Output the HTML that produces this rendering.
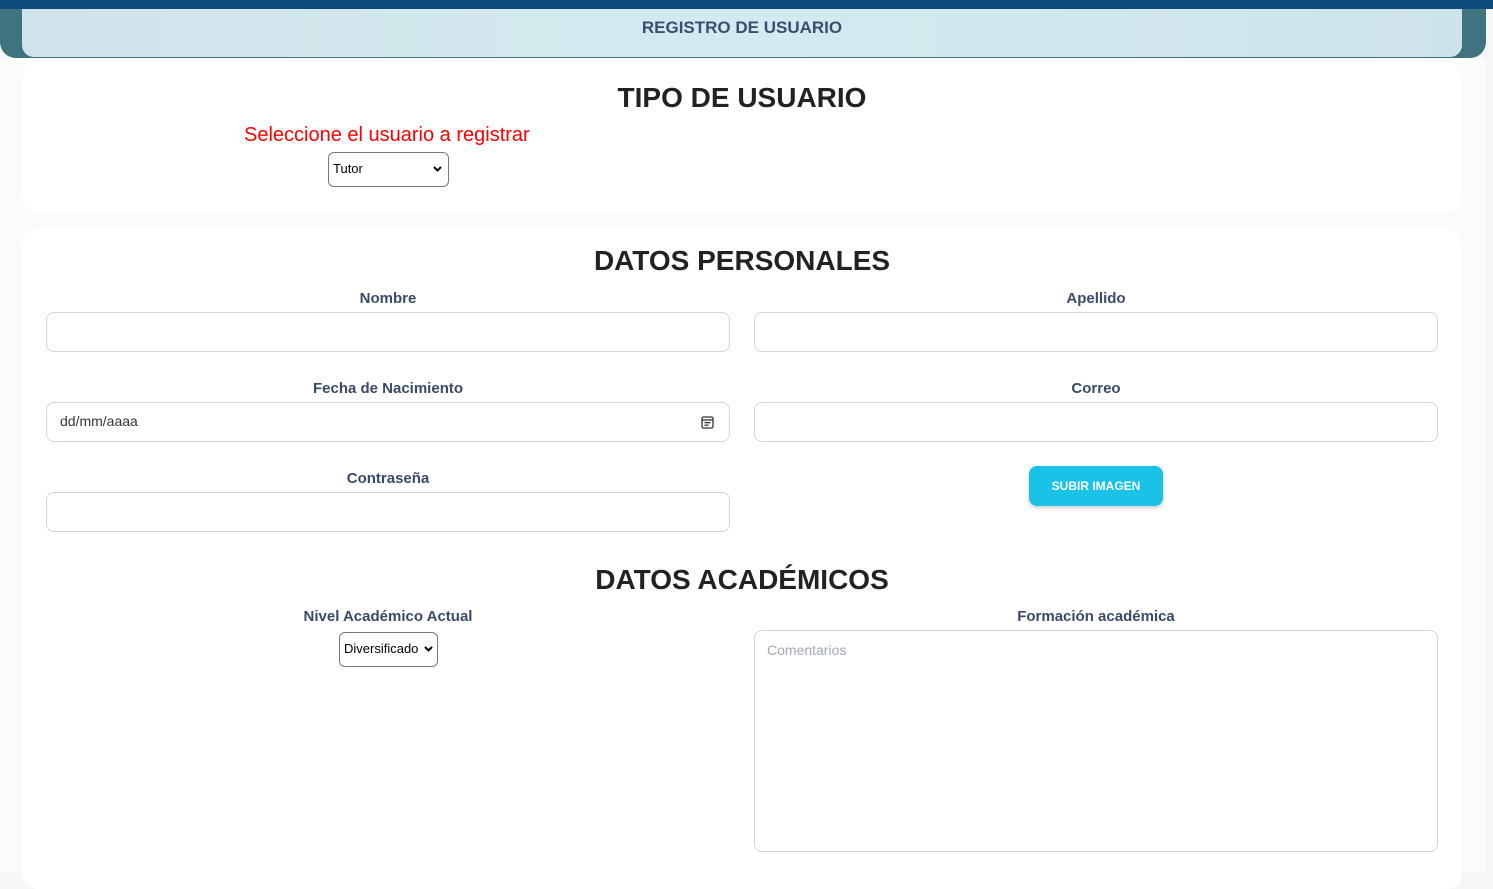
<!DOCTYPE html>
<html><head><meta charset="utf-8"><style>
*{box-sizing:border-box;margin:0;padding:0}
body{width:1493px;height:872px;overflow:hidden;background:#f5f6f8;font-family:"Liberation Sans",sans-serif;position:relative}
.a{position:absolute}
.top{left:0;top:0;width:1493px;height:9px;background:#0e4a7b}
.teal{left:0;top:9px;width:1486px;height:49px;background:#3f7380;border-radius:0 0 16px 16px}
.hdr{left:22px;top:9px;width:1440px;height:48px;background:linear-gradient(90deg,#cfe4ea,#d3ebf0 50%,#cde3ea);border-radius:0 0 12px 12px;text-align:center;font-size:17px;font-weight:bold;color:#3a4f6e;line-height:38px}
.panel{left:0;top:58px;width:1486px;height:814px;background:#fbfbfc}
.card{background:#fff;border-radius:16px}
.h1{font-weight:bold;font-size:28px;color:#222;text-align:center;width:1440px;left:22px}
.lbl{font-size:15px;color:#3a4a68;text-align:center;width:684px;font-weight:bold}
.inp{width:684px;height:40px;border:1px solid #d4d4dc;border-radius:8px;background:#fff}
.sel{border:1px solid #777;border-radius:6px;background:#fff;font-size:13px;color:#000;padding-left:4px;line-height:32px;height:35px}
.chev{position:absolute;right:6px;top:13px;width:9px;height:6px}
</style></head><body>
<div class="a top"></div>
<div class="a teal"></div>
<div class="a panel"></div>
<div class="a hdr">REGISTRO DE USUARIO</div>
<div class="a card" style="left:22px;top:62px;width:1440px;height:150px"></div>
<div class="a card" style="left:22px;top:229px;width:1440px;height:660px"></div>
<div class="a h1" style="top:82px">TIPO DE USUARIO</div>
<div class="a" style="left:244px;top:124px;font-size:20px;color:#f00">Seleccione el usuario a registrar</div>
<div class="a sel" style="left:328px;top:152px;width:121px">Tutor<svg class="chev" viewBox="0 0 9 6"><path d="M1 1l3.5 3.5L8 1" fill="none" stroke="#000" stroke-width="2"/></svg></div>
<div class="a h1" style="top:245px">DATOS PERSONALES</div>
<div class="a lbl" style="left:46px;top:290px">Nombre</div>
<div class="a lbl" style="left:754px;top:290px">Apellido</div>
<div class="a inp" style="left:46px;top:312px"></div>
<div class="a inp" style="left:754px;top:312px"></div>
<div class="a lbl" style="left:46px;top:380px">Fecha de Nacimiento</div>
<div class="a lbl" style="left:754px;top:380px">Correo</div>
<div class="a inp" style="left:46px;top:402px;padding-left:13px;font-size:14px;color:#333;line-height:37px">dd/mm/aaaa
<svg style="position:absolute;right:15px;top:13px" width="13" height="13" viewBox="0 0 13 13"><rect x="1" y="1" width="11" height="11" rx="1.5" fill="none" stroke="#333" stroke-width="1.3"/><line x1="1" y1="4" x2="12" y2="4" stroke="#333" stroke-width="1.3"/><rect x="3.5" y="6" width="6" height="1.3" fill="#333"/><rect x="3.5" y="8.5" width="4" height="1.3" fill="#333"/></svg></div>
<div class="a inp" style="left:754px;top:402px"></div>
<div class="a lbl" style="left:46px;top:470px">Contraseña</div>
<div class="a inp" style="left:46px;top:492px"></div>
<div class="a" style="left:1029px;top:466px;width:134px;height:40px;background:#1bc2e8;border-radius:8px;color:#fff;font-size:12px;font-weight:bold;text-align:center;line-height:40px;box-shadow:0 2px 5px rgba(0,0,0,.2)">SUBIR IMAGEN</div>
<div class="a h1" style="top:564px">DATOS ACADÉMICOS</div>
<div class="a lbl" style="left:46px;top:608px">Nivel Académico Actual</div>
<div class="a lbl" style="left:754px;top:608px">Formación académica</div>
<div class="a sel" style="left:339px;top:632px;width:99px">Diversificado<svg class="chev" viewBox="0 0 9 6" style="right:4px"><path d="M1 1l3.5 3.5L8 1" fill="none" stroke="#000" stroke-width="2"/></svg></div>
<div class="a inp" style="left:754px;top:630px;height:222px;padding:11px 12px;font-size:14px;color:#a0a8b4">Comentarios</div>
</body></html>
